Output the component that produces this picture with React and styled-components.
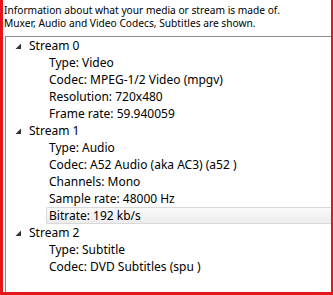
import React from "react";
import styled, { createGlobalStyle } from "styled-components";

const Global = createGlobalStyle`
  html, body { margin: 0; padding: 0; background: #fff; }
  body { font-family: "Noto Sans", "Open Sans", sans-serif; }
`;

const Frame = styled.div`
  box-sizing: border-box;
  width: 333px;
  height: 295px;
  border-left: 3px solid #e6141b;
  border-right: 2px solid #e6141b;
  border-bottom: 3px solid #e6141b;
  background: #fff;
  display: flex;
  flex-direction: column;
  overflow: hidden;
`;

const Description = styled.div`
  padding: 4px 0 0 1px;
  font-size: 10.2px;
  line-height: 13px;
  color: #000;
  white-space: nowrap;
`;

const Tree = styled.div`
  flex: 1;
  margin: 6px 0 0 2px;
  border-top: 1px solid #8c8c8c;
  border-left: 1px solid #8c8c8c;
  background: #fff;
`;

const Row = styled.div`
  box-sizing: border-box;
  height: 17px;
  display: flex;
  align-items: center;
  font-size: 12px;
  color: #000;
  white-space: nowrap;
  padding-left: ${(p) => (p.$level === 0 ? "9px" : "40px")};
`;

const Label = styled.span`
  box-sizing: border-box;
  height: 17px;
  display: flex;
  align-items: center;
  padding-left: ${(p) => (p.$selected ? "2px" : "3px")};
  ${(p) =>
    p.$selected &&
    `
    flex: 1;
    border: 1px solid #d9d9d9;
    border-right: none;
    border-radius: 2px 0 0 2px;
    background: linear-gradient(#fafafa, #ececec);
  `}
`;

const Expander = styled.span`
  width: 6px;
  height: 17px;
  display: flex;
  align-items: center;
  justify-content: center;
  margin-right: 8px;
`;

const Arrow = () => (
  <svg width="6" height="6" viewBox="0 0 6 6">
    <polygon points="6,0.5 6,6 0.5,6" fill="#333333" />
  </svg>
);

const streams = [
  {
    name: "Stream 0",
    items: ["Type: Video", "Codec: MPEG-1/2 Video (mpgv)", "Resolution: 720x480", "Frame rate: 59.940059"],
  },
  {
    name: "Stream 1",
    items: [
      "Type: Audio",
      "Codec: A52 Audio (aka AC3) (a52 )",
      "Channels: Mono",
      "Sample rate: 48000 Hz",
      "Bitrate: 192 kb/s",
    ],
    selected: 4,
  },
  {
    name: "Stream 2",
    items: ["Type: Subtitle", "Codec: DVD Subtitles (spu )"],
  },
];

export default function App() {
  return (
    <>
      <Global />
      <Frame>
        <Description>
          Information about what your media or stream is made of.
          <br />
          Muxer, Audio and Video Codecs, Subtitles are shown.
        </Description>
        <Tree>
          {streams.map((s) => (
            <React.Fragment key={s.name}>
              <Row $level={0}>
                <Expander>
                  <Arrow />
                </Expander>
                <span>{s.name}</span>
              </Row>
              {s.items.map((it, i) => (
                <Row key={it} $level={1}>
                  <Label $selected={s.selected === i}>{it}</Label>
                </Row>
              ))}
            </React.Fragment>
          ))}
        </Tree>
      </Frame>
    </>
  );
}
